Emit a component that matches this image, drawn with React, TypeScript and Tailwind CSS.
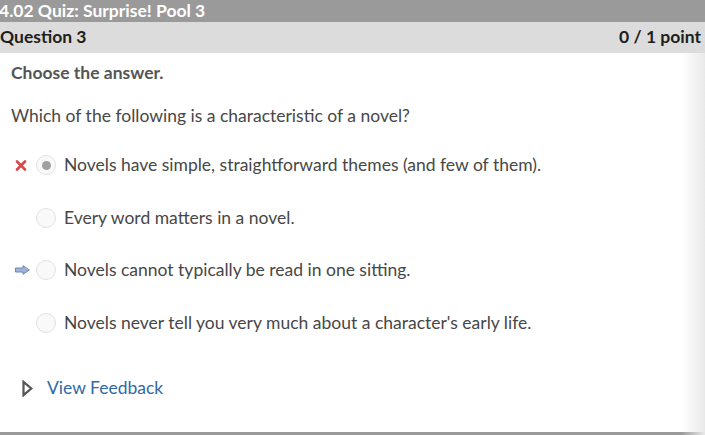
const options = [
  { text: 'Novels have simple, straightforward themes (and few of them).', mark: 'wrong', selected: true },
  { text: 'Every word matters in a novel.', mark: null, selected: false },
  { text: 'Novels cannot typically be read in one sitting.', mark: 'correct', selected: false },
  { text: "Novels never tell you very much about a character's early life.", mark: null, selected: false },
];

function WrongMark() {
  return (
    <svg width="12" height="11" viewBox="0 0 12 11">
      <path d="M2 1.5 L10 9.5 M10 1.5 L2 9.5" stroke="#d9474a" strokeWidth="2.6" strokeLinecap="round" />
    </svg>
  );
}

function ArrowMark() {
  return (
    <svg width="15" height="10" viewBox="0 0 15 10">
      <path d="M0.5 3 H8 V0.7 L14.3 5 L8 9.3 V7 H0.5 Z" fill="#9fb4d6" stroke="#6f86ad" strokeWidth="1" strokeLinejoin="round" />
    </svg>
  );
}

export default function App() {
  return (
    <div className="w-[705px] h-[435px] flex flex-col bg-white overflow-hidden font-['Lato','Liberation_Sans',sans-serif]">
      {/* Quiz title */}
      <div className="h-[22px] bg-[#9a9a9a] flex items-center -ml-[1px]">
        <span className="text-white font-bold text-[17.5px] leading-none">4.02 Quiz: Surprise! Pool 3</span>
      </div>

      {/* Question header */}
      <div className="h-[31px] bg-[#dcdcdc] flex items-center justify-between pr-[4px]">
        <span className="text-[#1e1e1e] font-bold text-[17.5px]">Question 3</span>
        <span className="text-[#1e1e1e] font-bold text-[17.5px]">0 / 1 point</span>
      </div>

      <div className="relative flex-1 flex flex-col">
        <div className="absolute top-0 right-0 bottom-0 w-[24px] bg-gradient-to-r from-transparent to-[#e9e9e9]" />

        <p className="mt-[10px] pl-[11px] h-[20px] leading-[20px] text-[17.5px] font-bold text-[#555555]">Choose the answer.</p>
        <p className="mt-[23px] pl-[11px] h-[20px] leading-[20px] text-[17.5px] text-[#474747]">
          Which of the following is a characteristic of a novel?
        </p>

        <div className="mt-[13px] flex flex-col">
          {options.map((o) => (
            <div key={o.text} className="h-[52.5px] flex items-center">
              <div className="w-[36px] pl-[15px] flex items-center">
                {o.mark === 'wrong' && <WrongMark />}
                {o.mark === 'correct' && <ArrowMark />}
              </div>
              <div className="w-[20px] h-[20px] rounded-full border border-[#e2e2e2] bg-[#f9f9f9] flex items-center justify-center">
                {o.selected && <div className="w-[9px] h-[9px] rounded-full bg-[#a0a0a0]" />}
              </div>
              <span className="ml-[8px] text-[17.5px] text-[#474747]">{o.text}</span>
            </div>
          ))}
        </div>

        <div className="mt-[13px] h-[53px] flex items-center">
          <div className="w-[47px] pl-[22px] flex items-center">
            <svg width="11" height="17" viewBox="0 0 11 17">
              <path d="M1.5 1.8 L9.3 8.5 L1.5 15.2 Z" fill="none" stroke="#555555" strokeWidth="2.2" strokeLinejoin="miter" />
            </svg>
          </div>
          <span className="text-[17.5px] text-[#2f6aa6]">View Feedback</span>
        </div>

        <div className="flex-1" />
        <div className="h-[3px] bg-[#9a9a9a]" />
      </div>
    </div>
  );
}
